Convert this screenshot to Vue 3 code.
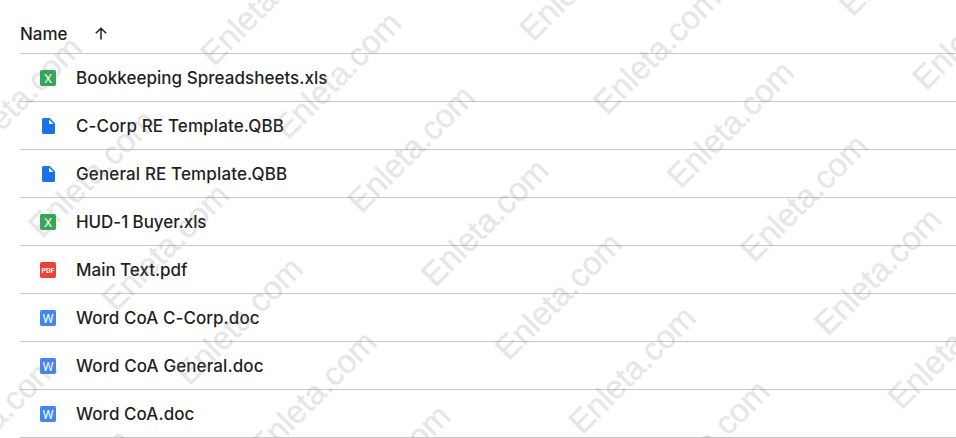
<template>
  <main class="file-browser">
    <!-- Column header -->
    <header class="list-header">
      <span class="list-title">Name</span>
      <svg class="sort-icon" width="12" height="13" viewBox="0 0 12 13" fill="none" stroke="currentColor" stroke-width="1.5">
        <path d="M6 12.5V1.5M.8 6.3 6 1.2l5.2 5.1" />
      </svg>
    </header>

    <!-- File rows -->
    <ul class="file-list">
      <li v-for="file in files" :key="file.name" class="file-row">
        <svg class="file-icon" width="16" height="16" viewBox="0 0 16 16">
          <template v-if="file.type === 'file'">
            <path fill="#1a73e8" d="M3.5 0h6.2L15 5.3v9.2a1.5 1.5 0 0 1-1.5 1.5h-10A1.5 1.5 0 0 1 2 14.5v-13A1.5 1.5 0 0 1 3.5 0z" />
            <path fill="#fff" d="M9 1.5V6h4.5z" />
          </template>
          <template v-else>
            <rect width="16" height="16" rx="1.7" :fill="badges[file.type]" />
            <text class="badge-text" :class="`badge-${file.type}`" x="8" :y="file.type === 'pdf' ? 10.6 : 12.6">{{ letters[file.type] }}</text>
          </template>
        </svg>
        <span class="file-name" :style="{ letterSpacing: file.spacing + 'px' }">{{ file.name }}</span>
      </li>
    </ul>

    <!-- Repeating diagonal watermark -->
    <svg class="watermark" width="956" height="438" aria-hidden="true">
      <g transform="translate(361.2 214.5) rotate(-45)">
        <text v-for="mark in marks" :key="mark.id" :x="mark.x" :y="mark.y">Enleta.com</text>
      </g>
    </svg>
  </main>
</template>

<script setup>
const badges = {
  xls: '#34a853',
  doc: '#4285f4',
  pdf: '#ea4335'
}

const letters = {
  xls: 'X',
  doc: 'W',
  pdf: 'PDF'
}

const files = [
  { name: 'Bookkeeping Spreadsheets.xls', type: 'xls', spacing: 0.03 },
  { name: 'C-Corp RE Template.QBB', type: 'file', spacing: 0.12 },
  { name: 'General RE Template.QBB', type: 'file', spacing: 0.13 },
  { name: 'HUD-1 Buyer.xls', type: 'xls', spacing: -0.06 },
  { name: 'Main Text.pdf', type: 'pdf', spacing: -0.02 },
  { name: 'Word CoA C-Corp.doc', type: 'doc', spacing: 0.05 },
  { name: 'Word CoA General.doc', type: 'doc', spacing: 0.1 },
  { name: 'Word CoA.doc', type: 'doc', spacing: 0.06 }
]

// Grid of marks, laid out in the rotated coordinate system.
// Marks that would fall fully outside the panel are skipped.
const marks = []
for (let row = -5; row <= 6; row++) {
  for (let col = -3; col <= 3; col++) {
    const x = col * 243.2
    const y = row * 104.15
    const left = 361.2 + (x + y) * Math.SQRT1_2
    const bottom = 214.5 + (y - x) * Math.SQRT1_2
    if (left > -120 && left < 975 && bottom > 0 && bottom < 570) {
      marks.push({ id: `${row}:${col}`, x, y })
    }
  }
}
</script>

<style>
body {
  margin: 0;
  background: #fff;
}
</style>

<style scoped>
.file-browser {
  position: relative;
  box-sizing: border-box;
  height: 438px;
  padding-left: 20px;
  overflow: hidden;
  background: #fff;
  color: #1f1f1f;
  font-family: Inter, 'Liberation Sans', sans-serif;
  font-size: 17px;
  font-weight: 500;
}

/* ── Header ────────────────────────────────────────── */
.list-header {
  display: flex;
  align-items: center;
  gap: 27px;
  box-sizing: border-box;
  height: 54px;
  padding-top: 14px;
  border-bottom: 1px solid #c7c7c7;
}

.list-title {
  width: 48px;
}

.sort-icon {
  margin-top: -1px;
}

/* ── Rows ──────────────────────────────────────────── */
.file-list {
  margin: 0;
  padding: 0;
  list-style: none;
}

.file-row {
  display: flex;
  align-items: center;
  gap: 20px;
  box-sizing: border-box;
  height: 48px;
  padding-left: 20px;
  border-bottom: 1px solid #c7c7c7;
}

.file-icon {
  flex: none;
  margin-top: 1px;
}

.badge-text {
  fill: #fff;
  font-family: Roboto, 'Liberation Sans', sans-serif;
  text-anchor: middle;
}

.badge-xls {
  font-size: 13px;
  font-weight: 400;
}

.badge-doc {
  font-size: 12.5px;
  font-weight: 400;
}

.badge-pdf {
  font-size: 7px;
  font-weight: 700;
}

.file-name {
  line-height: 24px;
  white-space: nowrap;
}

/* ── Watermark ─────────────────────────────────────── */
.watermark {
  position: absolute;
  inset: 0;
  pointer-events: none;
}

/* Opaque paint with element opacity keeps the outline and fill from doubling up */
.watermark text {
  fill: #808080;
  stroke: #808080;
  stroke-width: 0.4px;
  opacity: 0.19;
  font-family: 'Liberation Sans', Arial, sans-serif;
  font-size: 32.7px;
  font-weight: 400;
}
</style>
